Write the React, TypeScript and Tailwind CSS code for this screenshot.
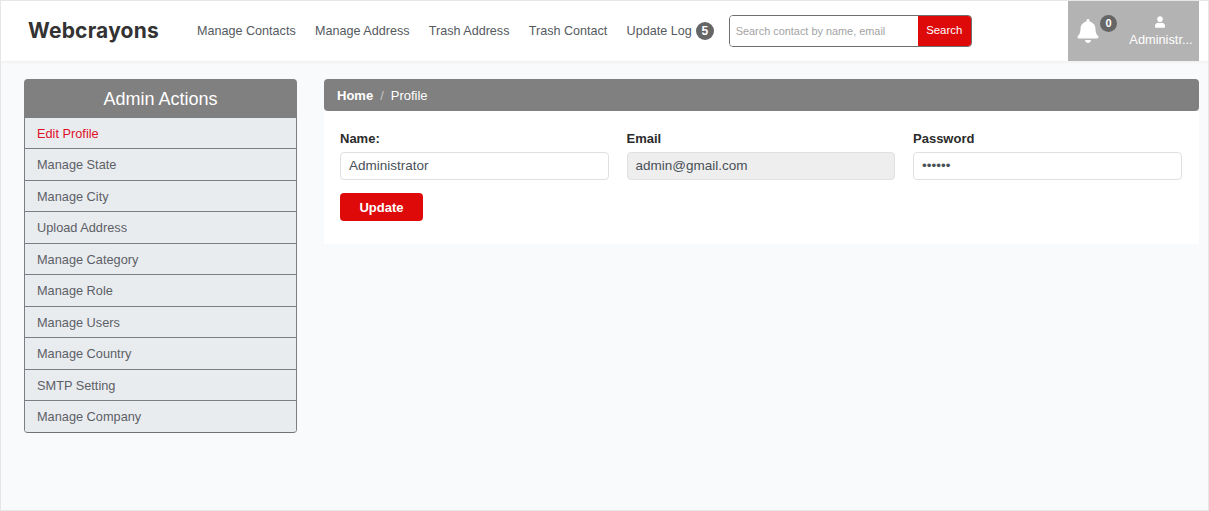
import { FaBell, FaUser } from "react-icons/fa";

const navLinks = ["Manage Contacts", "Manage Address", "Trash Address", "Trash Contact"];

const sideLinks = [
  "Edit Profile",
  "Manage State",
  "Manage City",
  "Upload Address",
  "Manage Category",
  "Manage Role",
  "Manage Users",
  "Manage Country",
  "SMTP Setting",
  "Manage Company",
];

export default function App() {
  return (
    <div className="flex h-[511px] w-[1209px] flex-col overflow-hidden border border-[#e6e6e6] bg-[#f9fafc] font-['Liberation_Sans',Arial,sans-serif]">
      {/* top bar */}
      <header className="flex h-[60px] shrink-0 items-center bg-white pl-[27px] pr-[9px] shadow-[0_1px_3px_rgba(0,0,0,0.06)]">
        <div className="w-[169px] font-['Inter',sans-serif] text-[21px] font-bold tracking-[0.2px] text-[#333333]">Webcrayons</div>
        <nav className="flex items-center gap-[19.25px] text-[12.6px] text-[#555a60]">
          {navLinks.map((link) => (
            <a key={link} className="whitespace-nowrap">{link}</a>
          ))}
          <span className="flex items-center gap-[4px] whitespace-nowrap">
            Update Log
            <span className="flex h-[18px] w-[18px] items-center justify-center rounded-full bg-[#666666] text-[12px] font-bold text-white">5</span>
          </span>
        </nav>
        <div className="ml-[15px] flex h-[32px] w-[243px] overflow-hidden rounded-[4px] border border-[#6f6f6f]">
          <div className="flex flex-1 items-center bg-white pl-[6px] text-[10.9px] text-[#a3a3a3]">Search contact by name, email</div>
          <button className="w-[53px] bg-[#de0a0a] text-[11.4px] text-white">Search</button>
        </div>
        <div className="ml-auto flex h-[60px] w-[131px] items-center bg-[#b3b3b3] text-white">
          <div className="relative ml-[9px] w-[30px]">
            <FaBell className="h-[24px] w-[22px]" />
            <span className="absolute -top-[4px] left-[23px] flex h-[17px] w-[17px] items-center justify-center rounded-full bg-[#666666] text-[11px] font-bold">0</span>
          </div>
          <div className="ml-[19px] flex w-[72px] flex-col items-center gap-[4px] pt-[1px]">
            <FaUser className="h-[12px] w-[10px] -translate-x-[2px]" />
            <span className="-translate-x-[1px] text-[12.8px] leading-[15px]">Administr...</span>
          </div>
        </div>
      </header>

      <main className="flex items-start gap-[27px] pl-[23px] pr-[9px] pt-[18px]">
        {/* sidebar */}
        <aside className="w-[273px] shrink-0 overflow-hidden rounded-[4px] border-b border-[#6f7378] bg-[#e9ecef]">
          <h2 className="flex h-[37.5px] items-center justify-center bg-[#808080] pt-[3px] text-[18px] text-white">Admin Actions</h2>
          <ul className="border-x border-[#7b7f84]">
            {sideLinks.map((link, i) => (
              <li
                key={link}
                className={`flex h-[31.5px] items-center border-t border-[#7b7f84] pl-[12px] pt-[1px] text-[12.75px] ${i === 0 ? "text-[#e0102a]" : "text-[#5c6066]"}`}
              >
                {link}
              </li>
            ))}
          </ul>
        </aside>

        {/* content */}
        <section className="flex-1">
          <div className="flex h-[32px] items-center gap-[7px] rounded-[4px] bg-[#808080] pl-[13px] pt-[1px] text-[13px] text-white">
            <span className="font-bold">Home</span>
            <span className="text-[#c4c4c4]">/</span>
            <span>Profile</span>
          </div>
          <div className="h-[133px] bg-white pl-[16px] pr-[17.5px] pt-[20px]">
            <div className="grid grid-cols-3 gap-[18px]">
              <Field label="Name:" value="Administrator" />
              <Field label="Email" value="admin@gmail.com" disabled />
              <Field label="Password" value="••••••" />
            </div>
            <button className="mt-[13px] h-[28px] w-[83px] rounded-[4px] bg-[#de0a0a] pt-[1px] text-[13px] font-bold text-white">Update</button>
          </div>
        </section>
      </main>
    </div>
  );
}

function Field({ label, value, disabled }: { label: string; value: string; disabled?: boolean }) {
  return (
    <div>
      <label className="block text-[13px] font-bold leading-[15px] text-[#2b2b2b]">{label}</label>
      <div
        className={`mt-[6px] flex h-[28px] items-center rounded-[4px] border border-[#e0e0e0] px-[8px] text-[13.5px] text-[#495057] ${disabled ? "bg-[#eeeeee]" : "bg-white"}`}
      >
        {value}
      </div>
    </div>
  );
}
